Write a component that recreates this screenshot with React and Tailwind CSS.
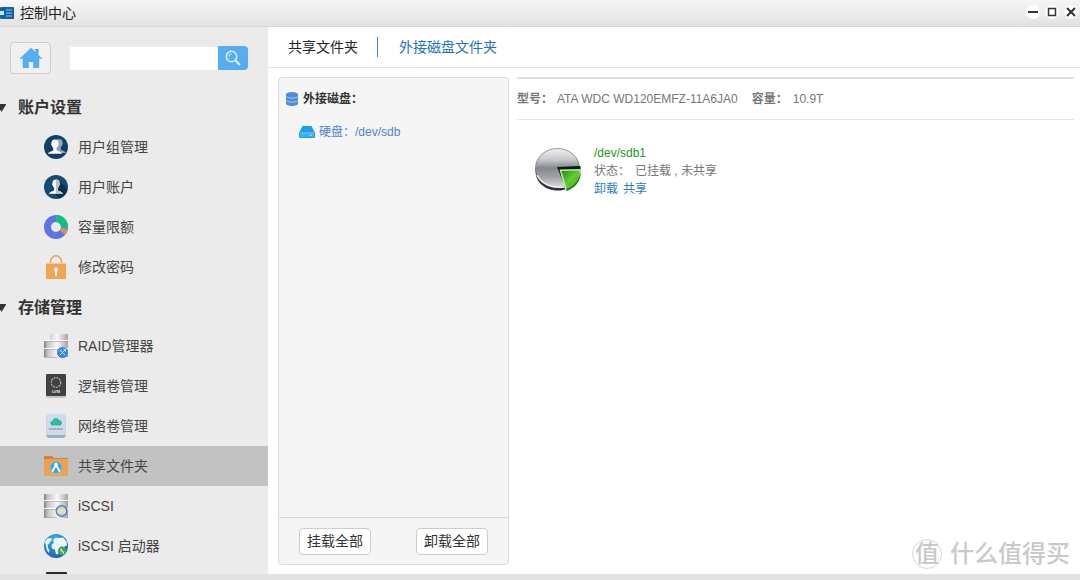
import React, { useState } from 'react';
import clsx from 'clsx';

const AppIcon = () => (
  <svg className="w-[14px] h-3 shrink-0" viewBox="0 0 14 12" aria-hidden="true">
    <rect width="14" height="12" rx="1" fill="#15609f" />
    <rect x="0" y="4" width="4" height="4" fill="#bfe6fb" />
    <path d="M6 3h6M6 6h6M6 9h6" stroke="#8cc8f0" strokeWidth="1" />
  </svg>
);

const HomeIcon = () => (
  <svg className="w-6 h-[22px]" viewBox="0 0 24 22" fill="#57adf4" aria-hidden="true">
    <path d="M12 .8.500 11.800h3.300v9.200h6v-6h4.400v6h6v-9.200h3.300L19.500 8V3.500h-3v1.300z" />
    <path d="M15 2h4.500v3z" fill="#4f9fe0" />
  </svg>
);

const SearchIcon = () => (
  <svg className="w-4 h-4" viewBox="0 0 16 16" fill="none" stroke="#dff1ff" aria-hidden="true">
    <circle cx="6.500" cy="6.500" r="5.200" strokeWidth="1.500" />
    <path d="M3.800 6.500a2.700 2.700 0 0 1 2.700-2.700" strokeWidth="1" />
    <path d="m10.300 10.300 4.700 4.700" strokeWidth="2.200" />
  </svg>
);

const personPath =
  'M12 4.500c-2.500 0-3.700 1.500-3.500 3.800-.6.200-.4 1.800.3 2.100.3 1.200.8 1.900 1.400 2.400v2.400c-.5 1-4.700 1.300-5.200 3.500h14c-.5-2.200-4.700-2.500-5.200-3.500v-2.400c.6-.5 1.100-1.200 1.400-2.400.7-.3.9-1.900.3-2.100.2-2.300-1-3.800-3.500-3.800z';

const GroupIcon = () => (
  <svg className="w-6 h-6" viewBox="0 0 24 24" aria-hidden="true">
    <circle cx="12" cy="12" r="12" fill="#123f66" />
    <path d={personPath} fill="#8fa6b8" transform="translate(3 -.6)" />
    <path d={personPath} fill="#fff" transform="translate(-1 0)" />
  </svg>
);

const UserIcon = () => (
  <svg className="w-6 h-6" viewBox="0 0 24 24" aria-hidden="true">
    <circle cx="12" cy="12" r="12" fill="#154a75" />
    <path d="m15 6 8.300 8.300A12 12 0 0 1 15 23.600l-4-5z" fill="#0d2f4f" />
    <path d={personPath} fill="#fff" />
    <path d="M12 4.500c2.500 0 3.700 1.500 3.500 3.800.6.200.4 1.800-.3 2.100-.3 1.200-.8 1.900-1.400 2.400v2.400c.5 1 4.700 1.300 5.200 3.500h-7z" fill="#b6c3ce" />
  </svg>
);

const QuotaIcon = () => (
  <svg className="w-6 h-6" viewBox="0 0 24 24" fill="none" strokeWidth="7" aria-hidden="true">
    <circle cx="12" cy="12" r="8.500" stroke="#5f74e4" />
    <path d="M12 3.500a8.500 8.500 0 0 1 8.400 9.800" stroke="#14bd83" />
    <path d="M20.400 13.300a8.500 8.500 0 0 1-2 4.200" stroke="#d4935a" />
  </svg>
);

const LockIcon = () => (
  <svg className="w-6 h-6" viewBox="0 0 24 24" aria-hidden="true">
    <path d="M6.500 8V6.300a5.500 5.500 0 0 1 11 0V8" fill="none" stroke="#e5a15a" strokeWidth="1.500" />
    <rect x="2" y="8.500" width="20" height="15.500" rx=".8" fill="#f3a452" />
    <circle cx="12" cy="14.500" r="2" fill="#fff" />
    <path d="M11 15h2v6h-2z" fill="#fff" />
  </svg>
);

const ServerBody = ({ id, stepped }) => (
  <>
    <defs>
      <linearGradient id={id} gradientUnits="userSpaceOnUse" x1="0" x2="24" y1="0" y2="0">
        <stop offset="0" stopColor="#808080" />
        <stop offset=".15" stopColor="#c4c4c4" />
        <stop offset=".55" stopColor="#f8f8f8" />
        <stop offset="1" stopColor="#a4a4a4" />
      </linearGradient>
    </defs>
    <rect x={stepped ? 6 : 0} y="0" width={stepped ? 18 : 24} height="7" fill={`url(#${id})`} />
    <rect x="0" y={stepped ? 6 : 7} width="24" height="17" fill={`url(#${id})`} />
    <path d="M0 6.500h24M0 14.500h24" stroke="#fff" strokeWidth="1.200" />
    <path d="M0 7.500h24M0 15.500h15M0 23.500h13" stroke="#999" strokeWidth=".6" />
  </>
);

const RaidIcon = () => (
  <svg className="w-6 h-6" viewBox="0 0 24 24" aria-hidden="true">
    <ServerBody id="raidMetal" stepped />
    <circle cx="18.500" cy="18.500" r="5.500" fill="#3486e4" />
    <path d="m15.800 21.200 5-5M16 16l5 5M15.500 17.500l1.800-1.800M19.500 15.500h2v2" fill="none" stroke="#cbe5ff" strokeWidth="1" />
  </svg>
);

const LvmIcon = () => (
  <svg className="w-6 h-6" viewBox="0 0 24 24" aria-hidden="true">
    <rect x="2" y="20" width="20" height="4" rx="1" fill="#c4c4c4" />
    <rect x="2" y="0" width="20" height="22" rx="1" fill="#414141" />
    <circle cx="12" cy="8.500" r="4.800" fill="none" stroke="#b0b0b0" strokeWidth="1.200" strokeDasharray="2 .8" />
    <text x="12" y="18.500" fill="#e4e4e4" fontSize="4" fontWeight="bold" textAnchor="middle">LVM</text>
  </svg>
);

const NetVolumeIcon = () => (
  <svg className="w-6 h-6" viewBox="0 0 24 24" aria-hidden="true">
    <rect x="2.500" y="1" width="19" height="23" rx="2" fill="#9eacbf" />
    <rect x="2.500" y="0" width="19" height="21" rx="2" fill="#d0dce8" />
    <path d="M9 11.500a2.400 2.400 0 0 1-.5-4.800 3.500 3.500 0 0 1 6.500-.8 3 3 0 0 1 1.500 5.600z" fill="#2fb9a3" />
    <path d="M5 15h14" stroke="#93aac2" strokeWidth="1.800" strokeDasharray="1.500 .4" />
  </svg>
);

const ShareFolderIcon = () => (
  <svg className="w-6 h-6" viewBox="0 0 24 24" aria-hidden="true">
    <path d="M0 3a1 1 0 0 1 1-1h7l2 2h13a1 1 0 0 1 1 1v4H0z" fill="#d37f45" />
    <rect y="5" width="24" height="17" rx=".8" fill="#eba252" />
    <circle cx="12" cy="13.500" r="6" fill="#3da9dc" stroke="#9bcbd0" strokeWidth=".6" />
    <circle cx="12" cy="10.500" r="1.700" fill="#fff" />
    <path d="m12 11-3.500 6M12 11l3.500 6" stroke="#fff" strokeWidth="1.800" strokeLinecap="round" />
  </svg>
);

const IscsiIcon = () => (
  <svg className="w-6 h-6" viewBox="0 0 24 24" aria-hidden="true">
    <ServerBody id="iscsiMetal" />
    <circle cx="17.500" cy="17" r="5.300" fill="#a8d2d8" stroke="#4477c8" strokeWidth="1.200" />
    <path d="M14.500 19.500a2 2 0 0 1 .3-3.900 2.900 2.900 0 0 1 5.400 0 2 2 0 0 1 .3 3.900z" fill="#e4e2bc" />
  </svg>
);

const GlobeIcon = () => (
  <svg className="w-6 h-6" viewBox="0 0 24 24" aria-hidden="true">
    <defs>
      <radialGradient id="globeSea" cx=".45" cy=".25" r=".8">
        <stop offset="0" stopColor="#37b2ee" />
        <stop offset="1" stopColor="#175fb0" />
      </radialGradient>
    </defs>
    <circle cx="12" cy="12" r="12" fill="url(#globeSea)" />
    <path d="m1 8 2.500-3.500L7 4l1 1.500L6 8l-1 2-1.500.5L4 14l1.500 2-.5 3-2-2.500zM9 6l3-2.500 3 .5 4-.5 3.500 4 .5 4-2 .5-1.500 2-1.500-2-2 1 .5 2.500L14 20l-2 .5-1-5-3-1-.5-3.500L10 9z" fill="#eef8ff" />
    <circle cx="18" cy="17" r="4.300" fill="#45a65b" />
    <path d="m16 16 4 2.500m-3-4 2.500 5" stroke="#d5f2d4" />
  </svg>
);

const TerminalIcon = () => (
  <svg className="w-6 h-6" viewBox="0 0 24 24" aria-hidden="true">
    <rect x="2" y="0" width="21" height="23" rx="1" fill="#2b2b2b" />
  </svg>
);

const DatabaseIcon = () => (
  <svg className="w-3 h-[14px] shrink-0" viewBox="0 0 12 14" aria-hidden="true">
    <path d="M0 2.500v9C0 13 2.700 14 6 14s6-1 6-2.500v-9z" fill="#4f8cd6" />
    <ellipse cx="6" cy="2.500" rx="6" ry="2.500" fill="#4f8cd6" />
    <path d="M0 4.300c1 2.400 11 2.400 12 0M0 8.300c1 2.400 11 2.400 12 0" fill="none" stroke="#c0d7f2" strokeWidth=".8" />
  </svg>
);

const DriveIcon = () => (
  <svg className="w-4 h-3 shrink-0" viewBox="0 0 16 12" aria-hidden="true">
    <path d="M3.500 0h9L16 7v4a1 1 0 0 1-1 1H1a1 1 0 0 1-1-1V7z" fill="#1b9fea" />
    <rect x="1" y="7.500" width="14" height="3.500" fill="#38b1f3" />
    <path d="M1 7h14" stroke="#c5e8ff" strokeWidth=".6" />
    <path d="M10 9.300h1m1 0h1" stroke="#fff" strokeWidth=".8" />
  </svg>
);

const PartitionIcon = () => (
  <svg className="w-[46px] h-11 shrink-0" viewBox="0 0 46 44" aria-hidden="true">
    <defs>
      <linearGradient id="discTop" x1="0" y1="0" x2="0" y2="1">
        <stop offset="0" stopColor="#f1f1f3" />
        <stop offset=".3" stopColor="#c4c5c9" />
        <stop offset=".5" stopColor="#85878c" />
        <stop offset=".75" stopColor="#a3a5ab" />
        <stop offset="1" stopColor="#dcdee3" />
      </linearGradient>
      <linearGradient id="slice" x1="0" y1="0" x2="1" y2="1">
        <stop offset="0" stopColor="#258a10" />
        <stop offset=".5" stopColor="#62cc36" />
        <stop offset="1" stopColor="#3fa824" />
      </linearGradient>
    </defs>
    <path d="M.500 19.500v3.500C.500 34 10 42.500 22.500 42.500c4 0 6-.5 8.500-1.500V20z" fill="#2f3135" />
    <ellipse cx="22.500" cy="20" rx="22" ry="19.500" fill="url(#discTop)" stroke="#7d7f83" strokeWidth=".8" />
    <path d="M2 27c5 10 16 13.500 27 12" fill="none" stroke="#f3f3f3" strokeWidth="1.500" />
    <path d="m22 19 23.500-1v4.500l-18.500.5 4 18z" fill="#0c1c0a" />
    <path d="m24.500 21.500 21-.5v6c-1.500 8-6.500 14-15 16.500z" fill="#bdeca8" />
    <path d="m26.500 23 18.500-.5c0 8-5 14.500-13.500 17.500z" fill="url(#slice)" />
    <path d="M45.500 24v3.500c-1.500 7.500-6 12.500-13.800 15.500l-.5-2.500C39 38 44 32 45.500 24z" fill="#2b7f19" />
  </svg>
);

const groups = [
  {
    title: '账户设置',
    headClass: 'h-10',
    items: [
      { name: '用户组管理', icon: GroupIcon },
      { name: '用户账户', icon: UserIcon },
      { name: '容量限额', icon: QuotaIcon },
      { name: '修改密码', icon: LockIcon },
    ],
  },
  {
    title: '存储管理',
    headClass: 'h-[39px]',
    items: [
      { name: 'RAID管理器', icon: RaidIcon },
      { name: '逻辑卷管理', icon: LvmIcon },
      { name: '网络卷管理', icon: NetVolumeIcon },
      { name: '共享文件夹', icon: ShareFolderIcon },
      { name: 'iSCSI', icon: IscsiIcon },
      { name: 'iSCSI 启动器', icon: GlobeIcon },
    ],
  },
];

const TitleBar = () => (
  <header className="h-[27px] shrink-0 flex items-center justify-between pr-[2px] border-b border-[#d6d6d6] bg-linear-to-b from-[#f6f6f6] to-[#e2e2e2]">
    <div className="flex items-center gap-1.5">
      <AppIcon />
      <h1 className="text-sm leading-5 text-[#222]">控制中心</h1>
    </div>
    <div className="flex items-center gap-[5px] pb-[2px]">
      <button aria-label="最小化" className="w-[14px] h-[14px] rounded-full bg-white">
        <svg viewBox="0 0 14 14" stroke="#333" strokeWidth="2" aria-hidden="true"><path d="M2 7h10" /></svg>
      </button>
      <button aria-label="最大化" className="w-[14px] h-[14px] rounded-full bg-white">
        <svg viewBox="0 0 14 14" fill="none" stroke="#333" strokeWidth="1.500" aria-hidden="true"><path d="M3.500 3.500h7v7h-7z" /></svg>
      </button>
      <button aria-label="关闭" className="w-[14px] h-[14px] rounded-full bg-white">
        <svg viewBox="0 0 14 14" stroke="#333" strokeWidth="2" aria-hidden="true"><path d="m3 3 8 8M11 3l-8 8" /></svg>
      </button>
    </div>
  </header>
);

const Sidebar = ({ active, onSelect }) => (
  <aside className="w-[268px] shrink-0 overflow-hidden bg-[#ebebeb]">
    <div className="flex items-center pt-[15px] pl-[10px] mb-[13px]">
      <button aria-label="主页" className="w-[41px] h-8 mr-[19px] flex items-center justify-center rounded border border-[#cfcfcf] bg-[#f0f0f0]">
        <HomeIcon />
      </button>
      <input type="text" aria-label="搜索" className="w-[148px] h-[23px] px-2 bg-white text-sm outline-none" />
      <button aria-label="搜索" className="w-[30px] h-6 flex items-center justify-center rounded-r bg-[#57adf2]">
        <SearchIcon />
      </button>
    </div>
    <nav>
      {groups.map(group => (
        <section key={group.title}>
          <h2 className={clsx('flex items-center gap-3 pt-0.5 text-base font-bold text-[#333]', group.headClass)}>
            <svg className="w-1.5 h-2" viewBox="0 0 6 8" aria-hidden="true"><path d="M-3 0h9.500L1.500 8z" fill="#333" /></svg>
            {group.title}
          </h2>
          {group.items.map(({ name, icon: Icon }) => (
            <button
              key={name}
              onClick={() => onSelect(name)}
              className={clsx('w-full h-10 pl-11 flex items-center gap-[10px] text-sm text-[#444]', active === name && 'bg-[#c2c2c2]')}
            >
              <Icon />
              {name}
            </button>
          ))}
        </section>
      ))}
      <div className="pl-11 pt-1.5">
        <TerminalIcon />
      </div>
    </nav>
  </aside>
);

const DiskPanel = () => (
  <div className="w-[231px] shrink-0 flex flex-col rounded border border-[#dcdcdc] bg-[#f5f5f5] text-xs">
    <div className="flex-1 pt-3">
      <h3 className="pl-[7px] h-[18px] flex items-center gap-[5px] font-bold text-[#333]">
        <DatabaseIcon />
        外接磁盘：
      </h3>
      <a href="#sdb" className="mt-[15px] pl-5 h-[18px] flex items-center gap-1 text-[#4a86cb]">
        <DriveIcon />
        硬盘：/dev/sdb
      </a>
    </div>
    <div className="h-[47px] px-5 flex items-center justify-between border-t border-[#d5d5d5]">
      <button className="w-[72px] h-[27px] rounded border border-[#ccc] bg-white text-sm leading-5 text-[#333]">挂载全部</button>
      <button className="w-[72px] h-[27px] rounded border border-[#ccc] bg-white text-sm leading-5 text-[#333]">卸载全部</button>
    </div>
  </div>
);

const DiskDetail = () => (
  <div className="flex-1 min-w-0 text-xs text-[#777]">
    <dl className="h-[43px] flex items-center border-t-2 border-b border-t-[#dedede] border-b-[#e4e4e4]">
      <dt className="font-bold w-10">型号：</dt>
      <dd className="mr-[14px]">ATA WDC WD120EMFZ-11A6JA0</dd>
      <dt className="font-bold w-[41px]">容量：</dt>
      <dd>10.9T</dd>
    </dl>
    <div className="flex items-start gap-[13px] pt-6 pl-[18px]">
      <div className="pt-1">
        <PartitionIcon />
      </div>
      <div className="leading-[18px]">
        <p className="text-[#219a21]">/dev/sdb1</p>
        <p className="flex gap-[5px]">
          <span>状态：</span>
          <span>已挂载 , 未共享</span>
        </p>
        <p className="flex gap-[5px] text-[#2a7fc6]">
          <a href="#umount">卸载</a>
          <a href="#share">共享</a>
        </p>
      </div>
    </div>
  </div>
);

const Watermark = () => (
  <div className="absolute right-[10px] bottom-[10px] flex items-center gap-2 text-[#c9c9c9] pointer-events-none">
    <span className="w-[30px] h-[30px] rounded-full border border-[#d8d8d8] flex items-center justify-center text-2xl leading-none font-medium">值</span>
    <span className="text-2xl leading-8 font-medium">什么值得买</span>
  </div>
);

export default function App() {
  const [active, setActive] = useState('共享文件夹');

  return (
    <div className="relative h-screen flex flex-col overflow-hidden bg-white font-['Liberation_Sans','Noto_Sans_CJK_SC',sans-serif]">
      <TitleBar />
      <div className="flex-1 min-h-0 flex">
        <Sidebar active={active} onSelect={setActive} />
        <main className="flex-1 min-w-0 flex flex-col">
          <div className="h-[41px] shrink-0 pl-5 flex items-center border-b border-[#e4e4e4] text-sm">
            <button className="text-[#222]">共享文件夹</button>
            <span className="w-px h-5 ml-[19px] mr-[21px] bg-[#3d85b8]" />
            <button className="text-[#2371bd]">外接磁盘文件夹</button>
          </div>
          <div className="flex-1 min-h-0 flex gap-2 pt-[9px] pb-[9px] pl-[10px] pr-1.5">
            <DiskPanel />
            <DiskDetail />
          </div>
        </main>
      </div>
      <footer className="h-1.5 shrink-0 bg-[#e2e2e2]" />
      <Watermark />
    </div>
  );
}
